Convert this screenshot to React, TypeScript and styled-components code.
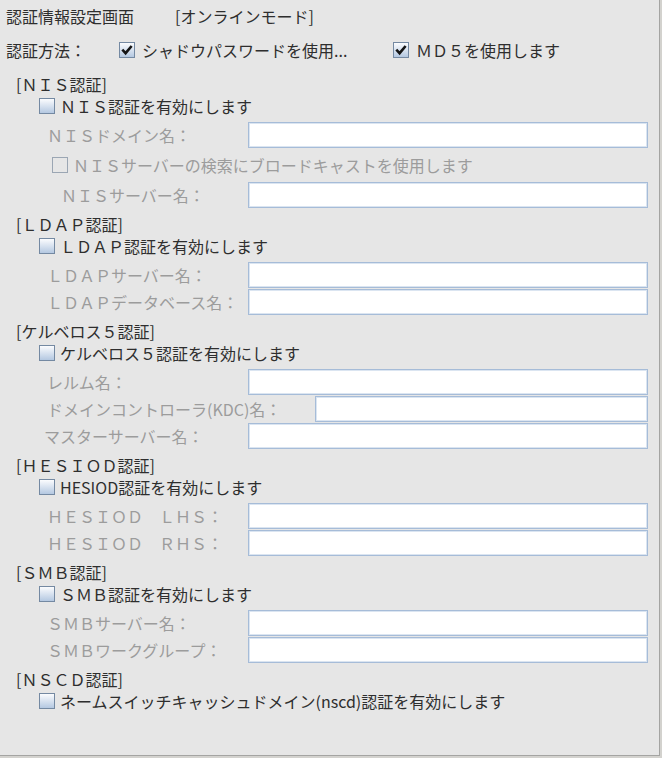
import React from "react";
import styled, { createGlobalStyle } from "styled-components";

const GlobalStyle = createGlobalStyle`
    html, body {
        margin: 0;
        padding: 0;
        background: #d3d2ce;
    }
    body {
        font-family: "Noto Sans CJK JP", "Noto Sans", sans-serif;
    }
`

type Field = {
    label: string
    indent?: number
    inputX?: number
}

type Section = {
    title: string
    enable: string
    fields: Field[]
}

const sections: Section[] = [
    {
        title: "[ＬＤＡＰ認証]",
        enable: "ＬＤＡＰ認証を有効にします",
        fields: [
            {label: "ＬＤＡＰサーバー名："},
            {label: "ＬＤＡＰデータベース名："},
        ],
    },
    {
        title: "[ケルベロス５認証]",
        enable: "ケルベロス５認証を有効にします",
        fields: [
            {label: "レルム名："},
            {label: "ドメインコントローラ(KDC)名：", inputX: 315},
            {label: "マスターサーバー名：", indent: 44},
        ],
    },
    {
        title: "[ＨＥＳＩＯＤ認証]",
        enable: "HESIOD認証を有効にします",
        fields: [
            {label: "ＨＥＳＩＯＤ　ＬＨＳ："},
            {label: "ＨＥＳＩＯＤ　ＲＨＳ："},
        ],
    },
    {
        title: "[ＳＭＢ認証]",
        enable: "ＳＭＢ認証を有効にします",
        fields: [
            {label: "ＳＭＢサーバー名："},
            {label: "ＳＭＢワークグループ："},
        ],
    },
]

const CheckBox = (props: { checked?: boolean, disabled?: boolean }) => {
    return (
        <Box $disabled={props.disabled}>
            {props.checked && (
                <svg width="14" height="14" viewBox="0 0 14 14">
                    <path d="M3.2 7.6 L5.6 10.2 L10.8 4" fill="none" stroke="#151515" strokeWidth="2.6"
                          strokeLinecap="square"/>
                </svg>
            )}
        </Box>
    )
}

const FieldLine = (props: Field) => {
    const indent = props.indent ?? 47
    const inputX = props.inputX ?? 248
    return (
        <FieldRow $indent={indent}>
            <FieldLabel $width={inputX - indent}>{props.label}</FieldLabel>
            <TextInput/>
        </FieldRow>
    )
}

export default function App() {
    return (
        <>
            <GlobalStyle/>
            <Frame>
                <TitleRow>
                    <TitleText>認証情報設定画面</TitleText>
                    <span>[オンラインモード]</span>
                </TitleRow>

                <MethodRow>
                    <MethodLabel>認証方法：</MethodLabel>
                    <Option $width={274}>
                        <CheckBox checked/>
                        <span>シャドウパスワードを使用...</span>
                    </Option>
                    <Option>
                        <CheckBox checked/>
                        <span>ＭＤ５を使用します</span>
                    </Option>
                </MethodRow>

                <SectionHeader>[ＮＩＳ認証]</SectionHeader>
                <CheckRow $indent={39}>
                    <CheckBox/>
                    <span>ＮＩＳ認証を有効にします</span>
                </CheckRow>
                <Fields>
                    <FieldLine label="ＮＩＳドメイン名："/>
                    <CheckRow $indent={52} $height={32} $disabled>
                        <CheckBox disabled/>
                        <span>ＮＩＳサーバーの検索にブロードキャストを使用します</span>
                    </CheckRow>
                    <FieldLine label="ＮＩＳサーバー名：" indent={61}/>
                </Fields>

                {sections.map(s => (
                    <React.Fragment key={s.title}>
                        <SectionHeader>{s.title}</SectionHeader>
                        <CheckRow $indent={39}>
                            <CheckBox/>
                            <span>{s.enable}</span>
                        </CheckRow>
                        <Fields>
                            {s.fields.map(f => <FieldLine key={f.label} {...f}/>)}
                        </Fields>
                    </React.Fragment>
                ))}

                <SectionHeader>[ＮＳＣＤ認証]</SectionHeader>
                <CheckRow $indent={39}>
                    <CheckBox/>
                    <span>ネームスイッチキャッシュドメイン(nscd)認証を有効にします</span>
                </CheckRow>
            </Frame>
        </>
    );
}

const Frame = styled.div`
    width: 659px;
    height: 755px;
    background: #e6e6e6;
    border-right: 1px solid #a4a4a2;
    border-bottom: 1px solid #a4a4a2;
    color: #2e2e2e;
    font-size: 16px;
    line-height: 1;
    display: flex;
    flex-direction: column;
    overflow: hidden;
`

const TitleRow = styled.div`
    display: flex;
    align-items: center;
    height: 32px;
    padding-left: 6px;
`

const TitleText = styled.span`
    width: 169px;
`

const MethodRow = styled.div`
    display: flex;
    align-items: center;
    height: 36px;
    padding-left: 6px;
`

const MethodLabel = styled.span`
    width: 113px;
`

const Option = styled.div<{ $width?: number }>`
    display: flex;
    align-items: center;
    gap: 7px;
    width: ${p => p.$width ? `${p.$width}px` : "auto"};
`

const SectionHeader = styled.div`
    display: flex;
    align-items: center;
    height: 22px;
    margin-top: 5px;
    padding-left: 16px;
`

const CheckRow = styled.div<{ $indent: number, $height?: number, $disabled?: boolean }>`
    display: flex;
    align-items: center;
    gap: 5px;
    height: ${p => p.$height ?? 22}px;
    padding-left: ${p => p.$indent}px;
    color: ${p => p.$disabled ? "#9c9c9c" : "inherit"};
`

const Box = styled.span<{ $disabled?: boolean }>`
    display: flex;
    align-items: center;
    justify-content: center;
    box-sizing: border-box;
    width: 16px;
    height: 16px;
    flex-shrink: 0;
    border: 1px solid ${p => p.$disabled ? "#9ba6b3" : "#7489a2"};
    background: ${p => p.$disabled ? "transparent" : "linear-gradient(#fbfcfe, #b4c8e1)"};
`

const Fields = styled.div`
    display: flex;
    flex-direction: column;
    gap: 1px;
    padding-top: 5px;
`

const FieldRow = styled.div<{ $indent: number }>`
    display: flex;
    align-items: center;
    height: 26px;
    padding-left: ${p => p.$indent}px;
`

const FieldLabel = styled.span<{ $width: number }>`
    width: ${p => p.$width}px;
    flex-shrink: 0;
    color: #9c9c9c;
    white-space: nowrap;
`

const TextInput = styled.div`
    flex: 1;
    height: 26px;
    box-sizing: border-box;
    margin-right: 11px;
    background: #ffffff;
    border: 1px solid #a6bcd8;
    box-shadow: inset 0 0 0 1px #dbe5f1;
`
